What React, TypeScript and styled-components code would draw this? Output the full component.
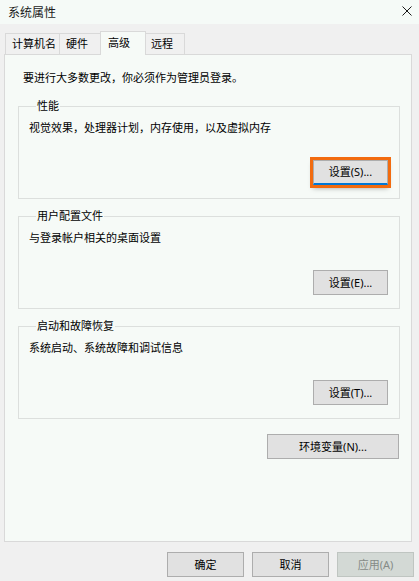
import styled, { createGlobalStyle } from 'styled-components';

const GlobalStyle = createGlobalStyle`
	html,
	body {
		margin: 0;
		padding: 0;
		background: #f0f0f0;
	}
	body {
		font-family: 'Noto Sans', 'Noto Sans CJK SC', sans-serif;
		font-size: 11px;
		color: #000;
	}
`;

const tabs = [
	{ label: '计算机名', width: 55 },
	{ label: '硬件', width: 43 },
	{ label: '高级', width: 46, active: true },
	{ label: '远程', width: 41 },
];

const groups = [
	{ title: '性能', desc: '视觉效果，处理器计划，内存使用，以及虚拟内存', button: '设置(S)...', focused: true },
	{ title: '用户配置文件', desc: '与登录帐户相关的桌面设置', button: '设置(E)...' },
	{ title: '启动和故障恢复', desc: '系统启动、系统故障和调试信息', button: '设置(T)...' },
];

export default function App() {
	return (
		<>
			<GlobalStyle />
			<DialogWindow>
				<TitleBar>
					<Title>系统属性</Title>
					<CloseButton aria-label='关闭'>
						<svg
							width='10'
							height='10'
							viewBox='0 0 10 10'
						>
							<path
								d='M0.5 0.5 L9.5 9.5 M9.5 0.5 L0.5 9.5'
								stroke='#1a1a1a'
								strokeWidth='1'
								fill='none'
							/>
						</svg>
					</CloseButton>
				</TitleBar>
				<DialogBody>
					<TabStrip>
						{tabs.map((t) => (
							<Tab
								key={t.label}
								$width={t.width}
								$active={!!t.active}
							>
								{t.label}
							</Tab>
						))}
					</TabStrip>
					<TabPanel>
						<Notice>要进行大多数更改，你必须作为管理员登录。</Notice>
						{groups.map((g) => (
							<Group key={g.title}>
								<GroupLegend>{g.title}</GroupLegend>
								<GroupDesc>{g.desc}</GroupDesc>
								<GroupButton $focused={!!g.focused}>{g.button}</GroupButton>
							</Group>
						))}
						<EnvButton>环境变量(N)...</EnvButton>
					</TabPanel>
				</DialogBody>
				<Footer>
					<DialogButton>确定</DialogButton>
					<DialogButton>取消</DialogButton>
					<DialogButton disabled>应用(A)</DialogButton>
				</Footer>
			</DialogWindow>
		</>
	);
}

const DialogWindow = styled.div`
	width: 419px;
	height: 581px;
	display: flex;
	flex-direction: column;
	background: #f0f0f0;
	overflow: hidden;
`;

const TitleBar = styled.div`
	height: 24px;
	flex: none;
	display: flex;
	align-items: center;
	justify-content: space-between;
	padding: 0 7px 0 8px;
	background: #f5faf7;
`;

const Title = styled.span`
	font-size: 12px;
	line-height: 16px;
	color: #1a1a1a;
	margin-top: 2px;
`;

const CloseButton = styled.span`
	display: flex;
	width: 10px;
	height: 10px;
	margin-top: -3px;
`;

const DialogBody = styled.div`
	flex: 1;
	display: flex;
	flex-direction: column;
	padding: 7px 7px 0 4px;
`;

const TabStrip = styled.div`
	display: flex;
	align-items: flex-end;
	height: 23px;
	padding-left: 1px;
`;

const Tab = styled.div<{ $width: number; $active: boolean }>`
	position: relative;
	box-sizing: border-box;
	width: ${(p) => p.$width}px;
	height: ${(p) => (p.$active ? 24 : 21)}px;
	margin-bottom: ${(p) => (p.$active ? -1 : 0)}px;
	margin-left: ${(p) => (p.$active ? -2 : -1)}px;
	margin-right: ${(p) => (p.$active ? -1 : 0)}px;
	z-index: ${(p) => (p.$active ? 1 : 0)};
	padding: ${(p) => (p.$active ? '3px 0 0 7px' : '2px 0 0 6px')};
	border: 1px solid #d9d9d9;
	border-bottom: none;
	background: ${(p) => (p.$active ? '#f6faf7' : '#f0f0f0')};
	line-height: 16px;
	white-space: nowrap;
	color: #000;

	&:first-child {
		margin-left: 0;
	}
`;

const TabPanel = styled.div`
	box-sizing: border-box;
	height: 488px;
	display: flex;
	flex-direction: column;
	padding: 15px 11px 0 13px;
	border: 1px solid #d9d9d9;
	background: #f6faf7;
`;

const Notice = styled.p`
	margin: 0 0 12px 5px;
	line-height: 16px;
`;

const Group = styled.fieldset`
	display: flex;
	flex-direction: column;
	margin: 0 0 9px;
	padding: 6px 11px 13px 10px;
	border: 1px solid #dcdfdd;
	min-width: 0;
`;

const GroupLegend = styled.legend`
	padding: 0 1px;
	margin-left: 7px;
	line-height: 16px;
`;

const GroupDesc = styled.p`
	margin: 0 0 24px;
	line-height: 16px;
`;

const Button = styled.button`
	box-sizing: border-box;
	height: 25px;
	padding: 0;
	border: 1px solid #adadad;
	background: #e1e1e1;
	font-family: inherit;
	font-size: 11px;
	line-height: 16px;
	color: #000;

	&:disabled {
		background: #d3d9d5;
		border-color: #bfc5c1;
		color: #858b87;
	}
`;

const GroupButton = styled(Button)<{ $focused: boolean }>`
	align-self: flex-end;
	width: 75px;
	${(p) =>
		p.$focused &&
		`
		border-bottom: 2px solid #0078d7;
		outline: 3px solid #f26b0f;
		outline-offset: 0;
		box-shadow: 0 3px 5px rgba(0, 0, 0, 0.35);
	`}
`;

const EnvButton = styled(Button)`
	align-self: flex-end;
	width: 132px;
	margin: 6px 1px 0 0;
`;

const Footer = styled.div`
	flex: none;
	display: flex;
	justify-content: flex-end;
	gap: 8px;
	padding: 10px 5px 4px;
`;

const DialogButton = styled(Button)`
	width: 77px;
`;
